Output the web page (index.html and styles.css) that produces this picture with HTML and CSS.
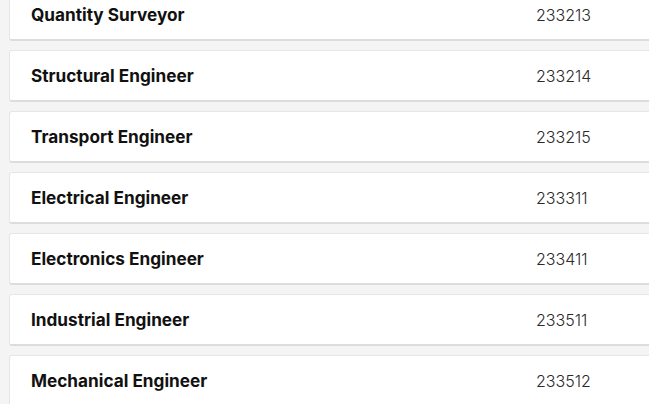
FILE: index.html
```html
<!DOCTYPE html>
<html>
<head>
<meta charset="utf-8">
<link rel="stylesheet" href="styles.css">
</head>
<body>
<ul class="list">
  <li class="card"><span class="name">Quantity Surveyor</span><span class="code">233213</span></li>
  <li class="card"><span class="name">Structural Engineer</span><span class="code">233214</span></li>
  <li class="card"><span class="name">Transport Engineer</span><span class="code">233215</span></li>
  <li class="card"><span class="name">Electrical Engineer</span><span class="code">233311</span></li>
  <li class="card"><span class="name">Electronics Engineer</span><span class="code">233411</span></li>
  <li class="card"><span class="name">Industrial Engineer</span><span class="code">233511</span></li>
  <li class="card"><span class="name">Mechanical Engineer</span><span class="code">233512</span></li>
</ul>
</body>
</html>
```

FILE: styles.css
```css
html, body {
  margin: 0;
  padding: 0;
  background: #f4f4f4;
  overflow: hidden;
}
.list {
  list-style: none;
  margin: -11px 0 0 0;
  padding: 0 0 0 9px;
  display: flex;
  flex-direction: column;
  gap: 9px;
  width: 720px;
}
.card {
  display: flex;
  align-items: center;
  height: 49px;
  background: #fff;
  border: 1px solid #e6e6e6;
  border-bottom: 2px solid #dcdcdc;
  border-radius: 3px;
  padding: 0 0 0 21px;
  font-family: Inter, "Noto Sans", sans-serif;
}
.name {
  width: 505px;
  font-size: 17.2px;
  font-weight: 700;
  color: #111;
}
.code {
  font-size: 16px;
  font-weight: 300;
  color: #2a2a2a;
}
```
